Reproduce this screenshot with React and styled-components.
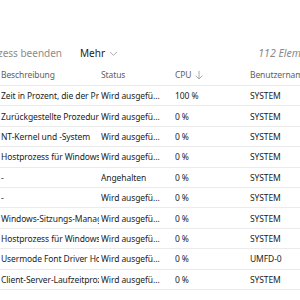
import React from "react";
import styled, { createGlobalStyle } from "styled-components";

const Global = createGlobalStyle`
  body {
    margin: 0;
    background: #ffffff;
    font-family: "Noto Sans", "Open Sans", sans-serif;
    overflow: hidden;
  }
`;

const Page = styled.div`
  width: 330px;
  height: 300px;
  overflow: hidden;
  padding-top: 43px;
  box-sizing: border-box;
`;

const Toolbar = styled.div`
  display: flex;
  align-items: center;
  height: 20px;
  font-size: 10px;
  padding-right: 9px;
`;

const ToolButton = styled.div`
  display: flex;
  align-items: center;
  gap: 4px;
  color: ${(p) => (p.disabled ? "#8c8c8c" : "#1b1b1b")};
  margin-left: ${(p) => p.offset || 0}px;
  white-space: nowrap;
`;

const Count = styled.div`
  margin-left: auto;
  font-style: italic;
  color: #8a8a8a;
  font-size: 10.5px;
  white-space: nowrap;
`;

const Row = styled.div`
  display: grid;
  grid-template-columns: 99px 74px 75px 1fr;
  align-items: center;
  height: ${(p) => (p.head ? "22px" : "20.4px")};
  box-sizing: border-box;
  border-bottom: 1px solid #ebebeb;
  font-size: 8.5px;
  letter-spacing: -0.1px;
  color: ${(p) => (p.head ? "#616161" : "#1c1c1c")};
`;

const Cell = styled.div`
  overflow: hidden;
  white-space: nowrap;
  padding-left: ${(p) => (p.first ? 1 : 2)}px;
  padding-right: ${(p) => (p.first ? 2 : p.tight ? 9 : 6)}px;
  display: flex;
  align-items: center;
  gap: 3px;
`;

const Trunc = styled.span`
  overflow: hidden;
  text-overflow: ellipsis;
  white-space: nowrap;
`;

const Head = styled.div`
  margin-top: 1px;
`;

const Chevron = () => (
  <svg width="9" height="9" viewBox="0 0 12 12" fill="none" stroke="#9a9a9a" strokeWidth="1.1">
    <path d="M1.5 4 L6 8.5 L10.5 4" />
  </svg>
);

const ArrowDown = () => (
  <svg width="10" height="10" viewBox="0 0 12 12" fill="none" stroke="#9a9a9a" strokeWidth="1">
    <path d="M6 1 V10.5 M2 6.8 L6 10.8 L10 6.8" />
  </svg>
);

const rows = [
  ["Zeit in Prozent, die der Prozessor im Leerlauf ist", "Wird ausgeführt", "100 %", "SYSTEM"],
  ["Zurückgestellte Prozeduraufrufe", "Wird ausgeführt", "0 %", "SYSTEM"],
  ["NT-Kernel und -System", "Wird ausgeführt", "0 %", "SYSTEM"],
  ["Hostprozess für Windows-Dienste", "Wird ausgeführt", "0 %", "SYSTEM"],
  ["-", "Angehalten", "0 %", "SYSTEM"],
  ["-", "Wird ausgeführt", "0 %", "SYSTEM"],
  ["Windows-Sitzungs-Manager", "Wird ausgeführt", "0 %", "SYSTEM"],
  ["Hostprozess für Windows-Dienste", "Wird ausgeführt", "0 %", "SYSTEM"],
  ["Usermode Font Driver Host", "Wird ausgeführt", "0 %", "UMFD-0"],
  ["Client-Server-Laufzeitprozess", "Wird ausgeführt", "0 %", "SYSTEM"],
];

export default function App() {
  return (
    <Page>
      <Global />
      <Toolbar>
        <ToolButton disabled offset={-18}>Prozess beenden</ToolButton>
        <ToolButton offset={18}>
          Mehr <Chevron />
        </ToolButton>
        <Count>112 Elemente</Count>
      </Toolbar>
      <Head>
        <Row head>
          <Cell first>Beschreibung</Cell>
          <Cell>Status</Cell>
          <Cell>
            CPU <ArrowDown />
          </Cell>
          <Cell>Benutzername</Cell>
        </Row>
      </Head>
      {rows.map((r, i) => (
        <Row key={i}>
          <Cell first>{r[0]}</Cell>
          <Cell tight>
            <Trunc>{r[1]}</Trunc>
          </Cell>
          <Cell>{r[2]}</Cell>
          <Cell>{r[3]}</Cell>
        </Row>
      ))}
    </Page>
  );
}
